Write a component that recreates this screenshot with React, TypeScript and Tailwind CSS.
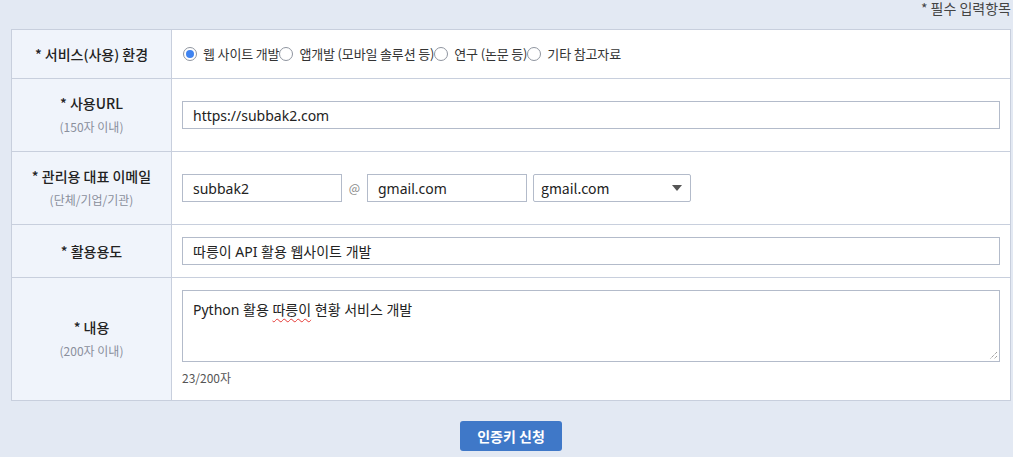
const kr = "font-['Noto_Sans_CJK_KR','Noto_Sans',sans-serif]";
const field = "font-['Noto_Sans','Noto_Sans_CJK_KR',sans-serif]";

function Label({ title, sub }: { title: string; sub?: string }) {
  return (
    <div className="w-[160px] shrink-0 bg-[#f0f4fb] border-r border-[#c8cfdd] flex flex-col items-center justify-center">
      <div className="text-[14px] leading-[24px] font-medium text-[#222]">{title}</div>
      {sub && <div className="text-[12px] leading-[24px] text-[#8a8f9c]">{sub}</div>}
    </div>
  );
}

function Radio({ label, checked }: { label: string; checked?: boolean }) {
  return (
    <div className="flex items-center">
      <span className="w-[14px] h-[14px] rounded-full border border-[#8f959f] bg-white flex items-center justify-center">
        {checked && <span className="w-[8px] h-[8px] rounded-full bg-[#3f83f0]" />}
      </span>
      <span className="ml-[6px] text-[13px] text-[#333] tracking-[-0.15px]">{label}</span>
    </div>
  );
}

function Input({ value, className }: { value: string; className: string }) {
  return (
    <div className={`h-[28px] border border-[#b3bbca] bg-white flex items-center px-[10px] text-[14px] text-[#222] ${field} ${className}`}>
      {value}
    </div>
  );
}

export default function App() {
  return (
    <div className={`w-[1013px] h-[457px] bg-[#e3e9f3] pl-[11px] pr-[2px] ${kr}`}>
      <div className="h-[29px] text-right text-[14px] leading-[17px] text-[#444]">* 필수 입력항목</div>
      <div className="border border-[#c8cfdd] bg-white">
        <div className="flex h-[49px] border-b border-[#c8cfdd]">
          <Label title="* 서비스(사용) 환경" />
          <div className="flex-1 flex items-center pl-[11px]">
            <Radio label="웹 사이트 개발" checked />
            <Radio label="앱개발 (모바일 솔루션 등)" />
            <Radio label="연구 (논문 등)" />
            <Radio label="기타 참고자료" />
          </div>
        </div>
        <div className="flex h-[73px] border-b border-[#c8cfdd]">
          <Label title="* 사용URL" sub="(150자 이내)" />
          <div className="flex-1 flex items-center pl-[10px] pr-[10px]">
            <Input value="https://subbak2.com" className="flex-1" />
          </div>
        </div>
        <div className="flex h-[73px] border-b border-[#c8cfdd]">
          <Label title="* 관리용 대표 이메일" sub="(단체/기업/기관)" />
          <div className="flex-1 flex items-center pl-[10px] pr-[10px]">
            <Input value="subbak2" className="w-[160px]" />
            <span className="w-[25px] text-center text-[12px] text-[#888]">@</span>
            <Input value="gmail.com" className="w-[160px]" />
            <div className="ml-[6px] w-[158px] h-[28px] border border-[#b3bbca] rounded-[2px] bg-white flex items-center justify-between pl-[7px] pr-[8px] text-[14px] text-[#222]">
              <span>gmail.com</span>
              <svg width="10" height="6" viewBox="0 0 10 6">
                <path d="M0 0h10L5 6z" fill="#555" />
              </svg>
            </div>
          </div>
        </div>
        <div className="flex h-[53px] border-b border-[#c8cfdd]">
          <Label title="* 활용용도" />
          <div className="flex-1 flex items-center pl-[10px] pr-[10px]">
            <Input value="따릉이 API 활용 웹사이트 개발" className="flex-1" />
          </div>
        </div>
        <div className="flex h-[122px]">
          <Label title="* 내용" sub="(200자 이내)" />
          <div className="flex-1 pl-[10px] pr-[10px] pt-[12px]">
            <div className={`relative h-[72px] border border-[#b3bbca] bg-white px-[10px] pt-[9px] text-[14px] leading-[20px] text-[#222] ${field}`}>
              Python 활용{' '}
              <span className="underline decoration-wavy decoration-[#e53935] decoration-1 underline-offset-[3px]">따릉이</span>{' '}
              현황 서비스 개발
              <svg className="absolute right-[1px] bottom-[1px]" width="10" height="10" viewBox="0 0 10 10">
                <path d="M9 2L2 9M9 6L6 9" stroke="#777" strokeWidth="1" strokeDasharray="1 1" />
              </svg>
            </div>
            <div className="mt-[6px] text-[12px] leading-[20px] text-[#555]">23/200자</div>
          </div>
        </div>
      </div>
      <div className="flex justify-center pt-[20px]">
        <button className="w-[102px] h-[30px] rounded-[3px] bg-[#3f78c8] text-white text-[14px] font-bold">인증키 신청</button>
      </div>
    </div>
  );
}
